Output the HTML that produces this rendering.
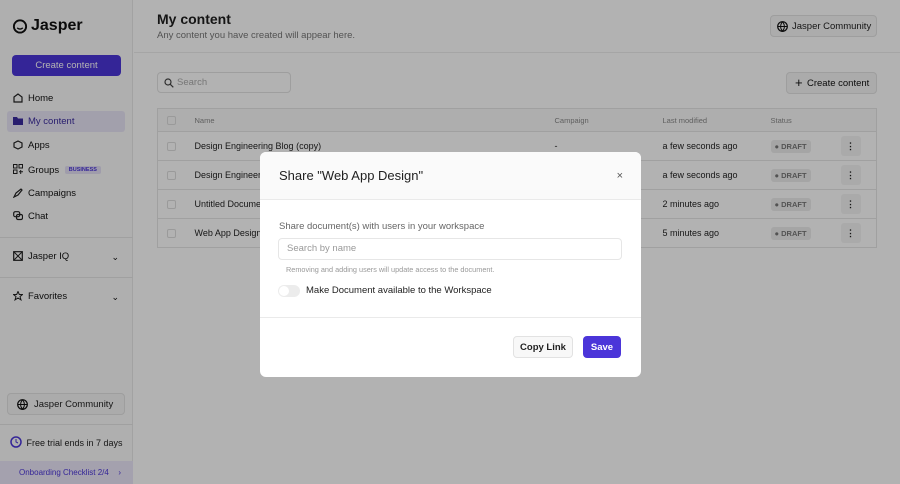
<!DOCTYPE html>
<html><head><style>
*{box-sizing:border-box;margin:0;padding:0}
body{width:900px;height:484px;position:relative;overflow:hidden;font-family:"Liberation Sans",sans-serif;background:#fff;color:#1f1f1f;white-space:nowrap}
.sb{position:absolute;left:0;top:0;width:133px;height:484px;background:#fbfbfb;border-right:1px solid #e8e8e8}
.logo{position:absolute;left:12px;top:17px;font-size:16px;font-weight:bold;display:flex;align-items:center;gap:3px;color:#111}
.cbtn{position:absolute;left:12px;top:55px;width:109px;height:21px;background:#4b35d9;color:#fff;border-radius:4px;font-size:9.5px;text-align:center;line-height:21px}
.nav{position:absolute;left:7px;width:118px;height:21px;font-size:9.5px;line-height:22px;padding-left:21px;border-radius:3px;color:#111}
.nav svg{position:absolute;left:6px;top:5px}
.hr{position:absolute;left:0;width:133px;height:1px;background:#e6e6e6}
.chev{position:absolute;right:6px;top:0;font-size:9px}
.main{position:absolute;left:134px;top:0;right:0;height:484px}
.btn{position:absolute;border:1px solid #e2e2e2;background:#f7f7f7;border-radius:4px;font-size:9.5px;height:22px;display:flex;align-items:center;white-space:nowrap}
table{position:absolute;left:157px;top:108px;width:720px;border-collapse:collapse;border:1px solid #e6e6e6;font-size:9px}
td{height:29px;border-top:1px solid #e6e6e6;padding:0}
tr.h td{height:23px;color:#888;font-size:7.5px;border-top:none;background:#fafafa}
.cb{display:inline-block;width:9px;height:9px;border:1px solid #ddd;border-radius:2px;margin-left:9px;vertical-align:middle}
.dr{display:inline-block;background:#ececec;border-radius:3px;font-size:7.5px;font-weight:bold;color:#777;padding:2px 4px}
.dots{display:inline-block;width:20px;height:20px;background:#f4f4f4;border-radius:3px;text-align:center;line-height:20px;font-weight:bold;vertical-align:middle}
.ov{position:absolute;left:0;top:0;width:900px;height:484px;background:rgba(0,0,0,0.3)}
.m{position:absolute;left:260px;top:152px;width:381px;height:225px;background:#fff;border-radius:6px;overflow:hidden}
.mh{height:48px;background:#fafafa;border-bottom:1px solid #eaeaea;font-size:13px;padding:16px 0 0 19px}
</style></head><body>
<div class="sb">
 <div class="logo"><svg width="16" height="16" viewBox="0 0 17 17"><circle cx="8.5" cy="9" r="6.5" fill="none" stroke="#111" stroke-width="2"/><path d="M5.5 10.5q3 2.5 6 0" stroke="#111" stroke-width="1.5" fill="none"/></svg>Jasper</div>
 <div class="cbtn">Create content</div>
 <div class="nav" style="top:88px"><svg width="10" height="10"><path d="M1 4L5 1l4 3v5H1z" fill="none" stroke="#222" stroke-width="1.2"/></svg>Home</div>
 <div class="nav" style="top:111px;background:#e9e6f6;color:#3a2a9f"><svg width="10" height="10"><path d="M0 1h4l1 1.5h5V9H0z" fill="#3a2a9f"/></svg>My content</div>
 <div class="nav" style="top:135px"><svg width="10" height="10"><path d="M5 1l4 2v4L5 9 1 7V3z" fill="none" stroke="#222" stroke-width="1.2"/></svg>Apps</div>
 <div class="nav" style="top:159px"><svg width="10" height="10"><rect x="0.5" y="0.5" width="3.5" height="3.5" fill="none" stroke="#222"/><rect x="6" y="0.5" width="3.5" height="3.5" fill="none" stroke="#222"/><rect x="0.5" y="6" width="3.5" height="3.5" fill="none" stroke="#222"/><path d="M7.7 6v4M6 7.8h4" stroke="#222"/></svg>Groups <span style="font-size:5.5px;font-weight:bold;background:#e4e0f5;color:#4b35d9;padding:1px 4px;border-radius:2px;margin-left:3px;vertical-align:2px">BUSINESS</span></div>
 <div class="nav" style="top:183px"><svg width="10" height="10"><path d="M1 9l2-4 5-4 1 1-4 5z" fill="none" stroke="#222" stroke-width="1.2"/></svg>Campaigns</div>
 <div class="nav" style="top:206px"><svg width="10" height="10"><rect x="0.7" y="0.7" width="6" height="5" rx="1.5" fill="none" stroke="#222" stroke-width="1.2"/><rect x="3.5" y="3.5" width="6" height="5" rx="1.5" fill="none" stroke="#222" stroke-width="1.2"/></svg>Chat</div>
 <div class="hr" style="top:237px"></div>
 <div class="nav" style="top:246px"><svg width="10" height="10"><rect x="0.7" y="0.7" width="8.6" height="8.6" fill="none" stroke="#222" stroke-width="1.2"/><path d="M1 1l8 8M9 1L1 9" stroke="#222"/></svg>Jasper IQ<span class="chev">⌄</span></div>
 <div class="hr" style="top:277px"></div>
 <div class="nav" style="top:286px"><svg width="10" height="10"><path d="M5 .5l1.3 3H9.5L7 5.6l1 3.3L5 7 2 8.9l1-3.3L.5 3.5h3.2z" fill="none" stroke="#222"/></svg>Favorites<span class="chev">⌄</span></div>
 <div class="btn" style="left:7px;top:393px;width:118px;padding-left:26px;background:#f5f5f5"><svg width="11" height="11" style="position:absolute;left:9px;top:5px" viewBox="0 0 11 11"><circle cx="5.5" cy="5.5" r="4.8" fill="none" stroke="#111" stroke-width="1.2"/><path d="M.7 5.5h9.6M5.5.7c-2.5 3-2.5 6.6 0 9.6c2.5-3 2.5-6.6 0-9.6" fill="none" stroke="#111"/></svg>Jasper Community</div>
 <div class="hr" style="top:424px"></div>
 <div style="position:absolute;left:10px;top:436px;font-size:9px"><svg width="12" height="12" style="vertical-align:-2px;margin-right:2px"><circle cx="6" cy="6" r="5" fill="none" stroke="#4b35d9" stroke-width="1.5"/><path d="M6 3v3l2 1" stroke="#4b35d9" fill="none"/></svg> Free trial ends in 7 days</div>
 <div style="position:absolute;left:0;top:461px;width:133px;height:23px;background:#ebe7fa;color:#4b35d9;font-size:8px;line-height:23px;padding-left:19px">Onboarding Checklist 2/4<span style="position:absolute;right:12px">›</span></div>
</div>
<div class="main">
 <div style="position:absolute;left:23px;top:11px;font-size:14px;font-weight:bold">My content</div>
 <div style="position:absolute;left:23px;top:30px;font-size:9.5px;color:#777">Any content you have created will appear here.</div>
 <div class="btn" style="left:636px;top:15px;width:107px;padding-left:21px"><svg width="11" height="11" style="position:absolute;left:6px;top:5px" viewBox="0 0 11 11"><circle cx="5.5" cy="5.5" r="4.8" fill="none" stroke="#111" stroke-width="1.2"/><path d="M.7 5.5h9.6M5.5.7c-2.5 3-2.5 6.6 0 9.6c2.5-3 2.5-6.6 0-9.6" fill="none" stroke="#111"/></svg>Jasper Community</div>
 <div style="position:absolute;left:0;top:52px;right:0;height:1px;background:#ececec"></div>
 <div style="position:absolute;left:23px;top:72px;width:134px;height:21px;border:1px solid #e2e2e2;border-radius:4px;font-size:9.5px;color:#aaa;line-height:20px;padding-left:19px"><svg width="10" height="10" style="position:absolute;left:6px;top:5px"><circle cx="4" cy="4" r="3" fill="none" stroke="#444" stroke-width="1.2"/><path d="M6.3 6.3l3 3" stroke="#444" stroke-width="1.2"/></svg>Search</div>
 <div class="btn" style="left:652px;top:72px;width:91px;padding-left:20px;background:#f5f5f5;color:#111"><span style="position:absolute;left:8px;top:3px;font-size:13px;line-height:14px">+</span>Create content</div>
</div>
<table>
<tr class="h"><td style="width:37px"><span class="cb"></span></td><td style="width:360px">Name</td><td style="width:108px">Campaign</td><td style="width:108px">Last modified</td><td style="width:70px">Status</td><td></td></tr>
<tr><td><span class="cb"></span></td><td>Design Engineering Blog (copy)</td><td>-</td><td>a few seconds ago</td><td><span class="dr">● DRAFT</span></td><td><span class="dots">⋮</span></td></tr>
<tr><td><span class="cb"></span></td><td>Design Engineering Blog</td><td>-</td><td>a few seconds ago</td><td><span class="dr">● DRAFT</span></td><td><span class="dots">⋮</span></td></tr>
<tr><td><span class="cb"></span></td><td>Untitled Document</td><td>-</td><td>2 minutes ago</td><td><span class="dr">● DRAFT</span></td><td><span class="dots">⋮</span></td></tr>
<tr><td><span class="cb"></span></td><td>Web App Design</td><td>-</td><td>5 minutes ago</td><td><span class="dr">● DRAFT</span></td><td><span class="dots">⋮</span></td></tr>
</table>
<div class="ov"></div>
<div class="m">
 <div class="mh">Share "Web App Design"<span style="position:absolute;right:18px;top:18px;font-size:11px;color:#555">×</span></div>
 <div style="position:absolute;left:19px;top:69px;font-size:9.5px;color:#666">Share document(s) with users in your workspace</div>
 <div style="position:absolute;left:18px;top:86px;width:344px;height:22px;border:1px solid #e6e6e6;border-radius:4px;font-size:9.5px;color:#999;line-height:20px;padding-left:8px">Search by name</div>
 <div style="position:absolute;left:26px;top:113px;font-size:7.3px;color:#999">Removing and adding users will update access to the document.</div>
 <div style="position:absolute;left:18px;top:133px;width:22px;height:12px;border-radius:6px;background:#ececec"><div style="width:10px;height:10px;margin:1px;background:#fff;border-radius:5px"></div></div>
 <div style="position:absolute;left:46px;top:133px;font-size:9.5px">Make Document available to the Workspace</div>
 <div style="position:absolute;left:0;top:165px;width:381px;height:1px;background:#eaeaea"></div>
 <div class="btn" style="left:253px;top:184px;width:60px;justify-content:center;background:#f8f8f8;font-weight:bold">Copy Link</div>
 <div style="position:absolute;left:323px;top:184px;width:38px;height:22px;border-radius:4px;background:#4b35d9;color:#fff;font-size:9.5px;font-weight:bold;display:flex;align-items:center;justify-content:center">Save</div>
</div>
</body></html>
